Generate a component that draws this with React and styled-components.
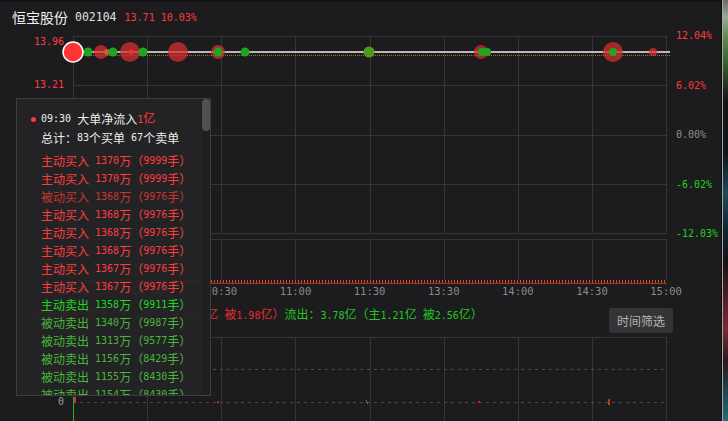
import React from "react";
import styled, { createGlobalStyle } from "styled-components";

const GlobalStyle = createGlobalStyle`
html, body {
  margin: 0;
  padding: 0;
  background: #1c1c1e;
}
body {
  font-family: "Noto Sans CJK SC", sans-serif;
}
`

const RED = "#ff3a3a";
const GREEN = "#22d022";
const GRID = "#363638";

const Page = styled.div`
position: relative;
width: 728px;
height: 421px;
overflow: hidden;
display: flex;
background: #1c1c1e;
`
const Main = styled.div`
flex: 1;
min-width: 0;
display: flex;
flex-direction: column;
border-top: 2px solid #111113;
`
const EdgeStrip = styled.div`
width: 6px;
border-left: 1px solid #0d0d0d;
box-shadow: inset 1px 0 0 #a8a8a8;
background: linear-gradient(to bottom, #6c6c6c 0%, #9aa89a 4%, #5c8a4c 9%, #2f5a2c 16%, #151515 24%, #101418 36%, #1c4a5a 46%, #0f2a36 54%, #121212 62%, #4a1e26 70%, #7a2a34 78%, #2a1a1e 86%, #1e4c56 94%, #2a6a70 100%);
`
const Header = styled.div`
height: 30px;
display: flex;
align-items: center;
padding-left: 12px;
white-space: pre;
`
const StockName = styled.span`
font-size: 14px;
color: #f0f0f0;
margin-right: 7px;
`
const StockCode = styled.span`
font-family: "DejaVu Sans Mono", monospace;
font-size: 11.5px;
color: #e0e0e0;
`
const Quote = styled.span`
font-family: "DejaVu Sans Mono", monospace;
font-size: 10px;
color: ${RED};
margin-left: 8px;
`
const ChartRow = styled.div`
display: flex;
height: ${p => p.$h}px;
margin-top: ${p => p.$mt || 0}px;
`
const LeftAxis = styled.div`
width: 73px;
flex: none;
display: flex;
flex-direction: column;
align-items: flex-end;
padding-right: 9px;
box-sizing: border-box;
padding-top: ${p => p.$pt || 0}px;
gap: ${p => p.$gap || 0}px;
`
const RightAxis = styled.div`
flex: 1;
display: flex;
flex-direction: column;
justify-content: space-between;
padding-left: 9px;
margin-top: -6px;
height: 210px;
`
const AxisLabel = styled.div`
font-family: "DejaVu Sans Mono", monospace;
font-size: 10px;
line-height: 12px;
height: 12px;
color: ${p => p.$color};
`
const Plot = styled.svg`
flex: none;
overflow: visible;
display: block;
`
const TimeAxis = styled.div`
display: grid;
grid-template-columns: repeat(9, 74.125px);
margin-left: 36px;
height: 13px;
`
const TimeLabel = styled.div`
font-family: "DejaVu Sans Mono", monospace;
font-size: 10.5px;
line-height: 13px;
color: #8a8a8a;
text-align: center;
`
const FlowRow = styled.div`
height: 39px;
display: flex;
justify-content: space-between;
align-items: flex-start;
padding-left: 32px;
padding-right: 48px;
`
const FlowText = styled.div`
margin-top: 9px;
font-size: 12px;
line-height: 14px;
white-space: pre;
`
const FlowPart = styled.span`
color: ${p => p.$color};
`
const FilterButton = styled.button`
margin-top: 10px;
width: 64px;
height: 25px;
border: none;
border-radius: 3px;
background: #343436;
color: #b4b4b4;
font-family: "Noto Sans CJK SC", sans-serif;
font-size: 12px;
padding: 0;
`
const Num = styled.span`
font-family: "DejaVu Sans Mono", monospace;
font-size: 10px;
`

const Tooltip = styled.div`
position: absolute;
left: 16px;
top: 98px;
width: 195px;
height: 298px;
box-sizing: border-box;
border: 1px solid #3e3e40;
background: rgba(36, 36, 38, 0.93);
display: flex;
`
const TipBody = styled.div`
flex: 1;
overflow: hidden;
padding: 10px 0 0 24px;
font-size: 12px;
line-height: 18px;
white-space: pre;
color: #ececec;
`
const TipLine = styled.div`
display: flex;
align-items: center;
color: ${p => p.$color || "#ececec"};
`
const Dot = styled.span`
width: 5px;
height: 5px;
border-radius: 50%;
background: ${RED};
margin-left: -10px;
margin-right: 5px;
`
const TradeList = styled.div`
margin-top: 5px;
`
const ScrollTrack = styled.div`
width: 8px;
background: #202022;
`
const ScrollThumb = styled.div`
height: 32px;
border-radius: 4px;
background: #505052;
`

const KIND_COLOR = {
    "主动买入": "#ff3d3d",
    "被动买入": "#c93434",
    "主动卖出": "#1fd51f",
    "被动卖出": "#48b63a",
}

const trades = [
    ["主动买入", "1370", "9999"],
    ["主动买入", "1370", "9999"],
    ["被动买入", "1368", "9976"],
    ["主动买入", "1368", "9976"],
    ["主动买入", "1368", "9976"],
    ["主动买入", "1368", "9976"],
    ["主动买入", "1367", "9976"],
    ["主动买入", "1367", "9976"],
    ["主动卖出", "1358", "9911"],
    ["被动卖出", "1340", "9987"],
    ["被动卖出", "1313", "9577"],
    ["被动卖出", "1156", "8429"],
    ["被动卖出", "1155", "8430"],
    ["被动卖出", "1154", "8430"],
]

// ascii runs get the narrow mono font, like the bitmap font in the app
const Mixed = ({ text }) =>
    text.split(/([\x20-\x7e]+)/).map((part, i) =>
        /^[\x20-\x7e]+$/.test(part) ? <Num key={i}>{part}</Num> : part
    )

const GX = Array.from({ length: 9 }, (_, i) => Math.round(i * 74.125) + 0.5)

const bubbles = [
    { x: 88, r: 4.5, c: "g" },
    { x: 101, r: 7, c: "r" },
    { x: 107, r: 3, c: "o" },
    { x: 113, r: 4.5, c: "g" },
    { x: 130, r: 10, c: "r" },
    { x: 131, r: 3, c: "r2" },
    { x: 143, r: 4.5, c: "g" },
    { x: 178, r: 10, c: "r" },
    { x: 218, r: 7, c: "r" },
    { x: 218, r: 4.5, c: "g" },
    { x: 245, r: 4.5, c: "g" },
    { x: 369, r: 5.5, c: "olive" },
    { x: 481, r: 7, c: "r" },
    { x: 482, r: 4, c: "g" },
    { x: 487, r: 4, c: "g" },
    { x: 613, r: 10, c: "r" },
    { x: 613, r: 4, c: "g" },
    { x: 653, r: 4, c: "r" },
]
const BUBBLE_FILL = {
    g: "#22a322",
    r: "rgba(212,44,44,0.75)",
    r2: "rgba(230,50,50,0.8)",
    o: "#b86a2a",
    olive: "#4c9b1c",
}

function TopPlot() {
    return (
        <Plot width={594} height={198}>
            {[0.5, 49.5, 99.5, 148.5, 197.5].map(y => (
                <line key={y} x1={0} x2={594} y1={y} y2={y} stroke={GRID} />
            ))}
            {GX.map(x => (
                <line key={x} x1={x} x2={x} y1={0} y2={198} stroke={GRID} />
            ))}
            <line x1={-10} x2={597} y1={19.5} y2={19.5} stroke="#a8682c" strokeDasharray="1 1" />
            <line x1={-10} x2={597} y1={16} y2={16} stroke="#ececec" strokeWidth={1.4} />
            {bubbles.map((b, i) => (
                <circle key={i} cx={b.x - 73} cy={16} r={b.r} fill={BUBBLE_FILL[b.c]} />
            ))}
            <circle cx={0} cy={16} r={10} fill="#ff3434" stroke="#ffffff" strokeWidth={1.5} />
        </Plot>
    )
}

function TickPlot() {
    return (
        <Plot width={594} height={46}>
            <defs>
                <pattern id="ticks" width={3} height={5} patternUnits="userSpaceOnUse">
                    <rect x={0} y={0} width={1} height={4} fill="#e4442a" />
                </pattern>
            </defs>
            <line x1={0} x2={594} y1={0.5} y2={0.5} stroke={GRID} />
            {GX.map(x => (
                <line key={x} x1={x} x2={x} y1={0} y2={41} stroke={GRID} />
            ))}
            <rect x={0} y={41} width={594} height={4} fill="url(#ticks)" />
            <rect x={0} y={44} width={594} height={1} fill="#9a3422" />
        </Plot>
    )
}

function BottomPlot() {
    return (
        <Plot width={594} height={84}>
            <line x1={0} x2={594} y1={0.5} y2={0.5} stroke={GRID} />
            {GX.map(x => (
                <line key={x} x1={x} x2={x} y1={0} y2={84} stroke={GRID} />
            ))}
            {[32.5, 65.5].map(y => (
                <line key={y} x1={0} x2={594} y1={y} y2={y} stroke="#4a4a4c" strokeDasharray="3 4" />
            ))}
            <line x1={0.5} x2={0.5} y1={60} y2={84} stroke="#26b026" />
            <rect x={1} y={60} width={2} height={6} fill="#e02a2a" />
            <rect x={144} y={64} width={2} height={2} fill="#c02828" />
            <rect x={293} y={63} width={1} height={3} fill="#d83030" />
            <rect x={294} y={65} width={1} height={2} fill="#22a022" />
            <rect x={405} y={64} width={2} height={2} fill="#c02828" />
            <rect x={535} y={62} width={2} height={5} fill="#d02828" />
            <rect x={535} y={67} width={2} height={1} fill="#22a022" />
        </Plot>
    )
}

const times = ["09:30", "10:00", "10:30", "11:00", "11:30", "13:30", "14:00", "14:30", "15:00"]

function App() {
    return (
        <Page>
            <GlobalStyle />
            <Main>
                <Header>
                    <StockName>恒宝股份</StockName>
                    <StockCode>002104</StockCode>
                    <Quote>13.71 10.03%</Quote>
                </Header>
                <ChartRow $h={198} $mt={4}>
                    <LeftAxis $gap={31}>
                        <AxisLabel $color={RED}>13.96</AxisLabel>
                        <AxisLabel $color={RED}>13.21</AxisLabel>
                    </LeftAxis>
                    <TopPlot />
                    <RightAxis>
                        <AxisLabel $color={RED}>12.04%</AxisLabel>
                        <AxisLabel $color={RED}>6.02%</AxisLabel>
                        <AxisLabel $color="#8e8e8e">0.00%</AxisLabel>
                        <AxisLabel $color={GREEN}>-6.02%</AxisLabel>
                        <AxisLabel $color={GREEN}>-12.03%</AxisLabel>
                    </RightAxis>
                </ChartRow>
                <ChartRow $h={46} $mt={5}>
                    <LeftAxis />
                    <TickPlot />
                </ChartRow>
                <TimeAxis>
                    {times.map(t => <TimeLabel key={t}>{t}</TimeLabel>)}
                </TimeAxis>
                <FlowRow>
                    <FlowText>
                        <FlowPart $color="#e03030"><Mixed text="大单流向 流入：5.16亿（主3.18亿 被1.98亿）" /></FlowPart>
                        <FlowPart $color="#22c822"><Mixed text="流出：3.78亿（主1.21亿 被2.56亿）" /></FlowPart>
                    </FlowText>
                    <FilterButton>时间筛选</FilterButton>
                </FlowRow>
                <ChartRow $h={84}>
                    <LeftAxis $pt={59}>
                        <AxisLabel $color="#9a9a9a">0</AxisLabel>
                    </LeftAxis>
                    <BottomPlot />
                </ChartRow>
            </Main>
            <EdgeStrip />
            <Tooltip>
                <TipBody>
                    <TipLine>
                        <Dot />
                        <Mixed text="09:30 大单净流入" />
                        <FlowPart $color={RED}><Mixed text="1亿" /></FlowPart>
                    </TipLine>
                    <TipLine>
                        <Mixed text="总计：83个买单 67个卖单" />
                    </TipLine>
                    <TradeList>
                        {trades.map(([kind, amount, lots], i) => (
                            <TipLine key={i} $color={KIND_COLOR[kind]}>
                                <Mixed text={`${kind} ${amount}万（${lots}手）`} />
                            </TipLine>
                        ))}
                    </TradeList>
                </TipBody>
                <ScrollTrack>
                    <ScrollThumb />
                </ScrollTrack>
            </Tooltip>
        </Page>
    )
}

export default App;
